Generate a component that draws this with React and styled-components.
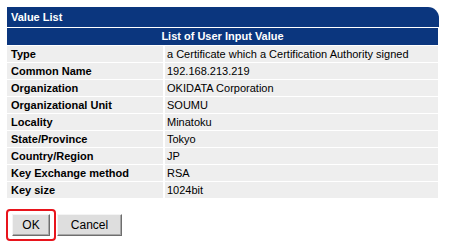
import { Fragment } from 'react'
import styled, { createGlobalStyle } from 'styled-components'

const GlobalStyle = createGlobalStyle`
  body {
    margin: 0;
    background: #ffffff;
    font-family: "Liberation Sans", Arial, sans-serif;
    font-size: 11px;
    color: #000000;
  }
`

// whole page: the list panel and the button row
const Page = styled.div`
  padding: 7px 0 0 7px;
  width: 432px;
`

const TitleBar = styled.div`
  height: 20px;
  line-height: 20px;
  background: #0b367e;
  color: #ffffff;
  font-weight: bold;
  padding-left: 4px;
  border-top-right-radius: 11px;
`

const Table = styled.div`
  display: grid;
  grid-template-columns: 156px 1fr;
  column-gap: 2px;
  row-gap: 1px;
  width: 431px;
  margin-top: 1px;
`

const HeadCell = styled.div`
  grid-column: 1 / span 2;
  height: 17px;
  line-height: 17px;
  background: #0b367e;
  color: #ffffff;
  font-weight: bold;
  text-align: center;
`

const Cell = styled.div`
  height: 16px;
  line-height: 17px;
  background: #eeeeee;
  padding-left: ${(props) => (props.$label ? '4px' : '2px')};
  font-weight: ${(props) => (props.$label ? 'bold' : 'normal')};
  white-space: nowrap;
`

const Buttons = styled.div`
  display: flex;
  align-items: center;
  gap: 1px;
  margin-top: 11px;
  margin-left: -1px;
`

const Focus = styled.div`
  display: flex;
  align-items: center;
  border: 2px solid #e8141c;
  border-radius: 4px;
  padding: 2px 4px;
  height: 24px;
`

const Button = styled.button`
  width: ${(props) => props.$w}px;
  height: 22px;
  padding: 0;
  background: #dedede;
  border: 1px solid;
  border-color: #f4f4f4 #6e6e6e #6e6e6e #f4f4f4;
  box-shadow: inset -1px -1px 0 #a8a8a8;
  font-family: "Liberation Sans", Arial, sans-serif;
  font-size: 12px;
  color: #000000;
`

const rows = [
  ['Type', 'a Certificate which a Certification Authority signed'],
  ['Common Name', '192.168.213.219'],
  ['Organization', 'OKIDATA Corporation'],
  ['Organizational Unit', 'SOUMU'],
  ['Locality', 'Minatoku'],
  ['State/Province', 'Tokyo'],
  ['Country/Region', 'JP'],
  ['Key Exchange method', 'RSA'],
  ['Key size', '1024bit'],
]

function App() {
  return (
    <>
      <GlobalStyle />
      <Page>
        <TitleBar>Value List</TitleBar>
        <Table>
          <HeadCell>List of User Input Value</HeadCell>
          {rows.map(([k, v]) => (
            <Fragment key={k}>
              <Cell $label>{k}</Cell>
              <Cell>{v}</Cell>
            </Fragment>
          ))}
        </Table>
        <Buttons>
          <Focus>
            <Button $w={38}>OK</Button>
          </Focus>
          <Button $w={65}>Cancel</Button>
        </Buttons>
      </Page>
    </>
  )
}

export default App
